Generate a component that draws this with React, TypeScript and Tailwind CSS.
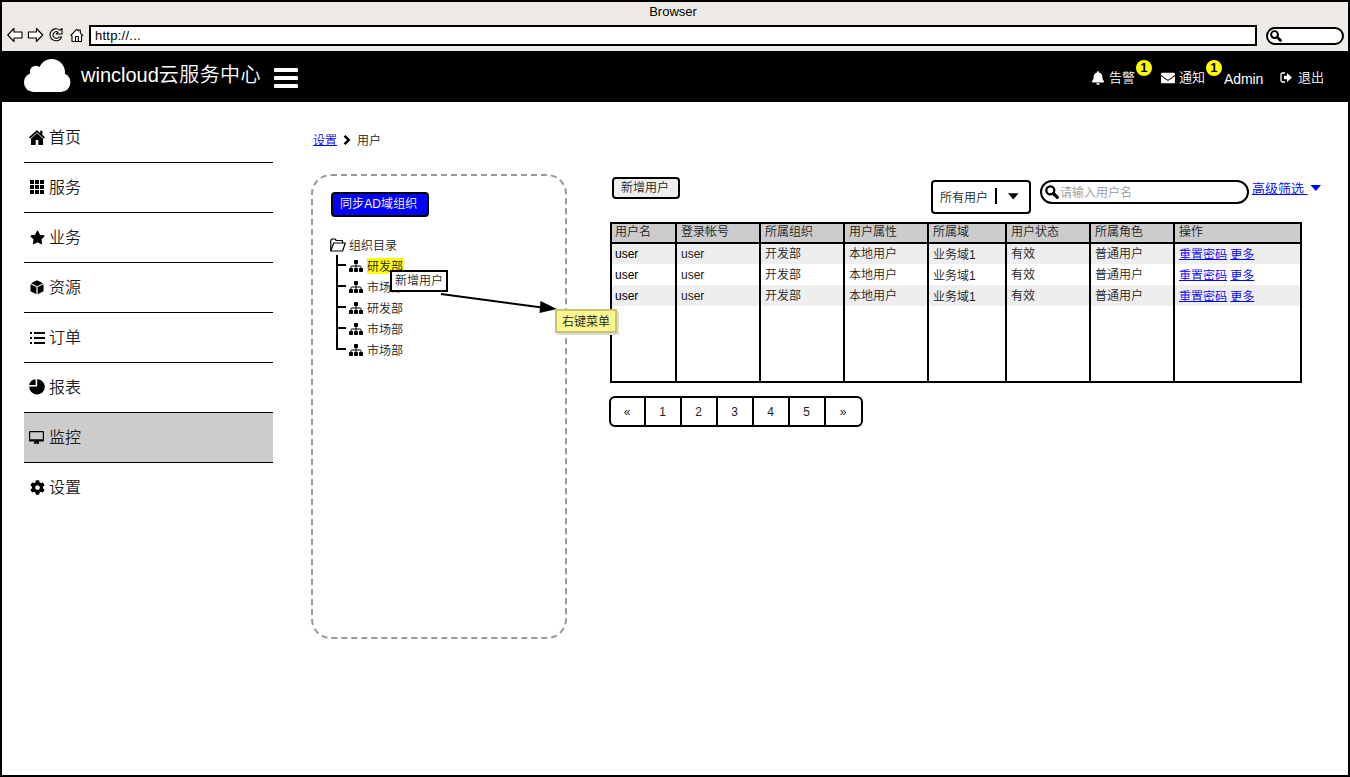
import { FaBell, FaCog, FaEnvelope, FaStar } from "react-icons/fa";
import type { ReactNode } from "react";

const HouseIcon = () => (
  <svg width="16" height="15" viewBox="0 0 16 15" fill="currentColor">
    <path d="M8 0L11.2 2.9V0.8H13.4V4.8L16 7.2L14.9 8.5L8 2.4L1.1 8.5L0 7.2Z" />
    <path d="M8 3.3L14 8.6V15H9.3V10H6.7V15H2V8.6Z" />
  </svg>
);

const CubeIcon = () => (
  <svg className="ml-px" width="14" height="15" viewBox="0 0 14 15" fill="currentColor">
    <path d="M7 0.3L13 3.2L7 6.2L1 3.2Z" />
    <path d="M0.5 4.2L6.4 7.1V14.3L0.5 11.2Z" />
    <path d="M13.5 4.2L7.6 7.1V14.3L13.5 11.2Z" />
  </svg>
);

const SitemapIcon = () => (
  <svg className="ml-[3px]" width="14" height="12" viewBox="0 0 14 12" fill="black">
    <rect x="5" y="0" width="4" height="4" rx="0.8" />
    <rect x="0" y="8" width="4" height="4" rx="0.8" />
    <rect x="5" y="8" width="4" height="4" rx="0.8" />
    <rect x="10" y="8" width="4" height="4" rx="0.8" />
    <path d="M7 3.5V8.5M2 8.5V6.7Q2 6 2.7 6H11.3Q12 6 12 6.7V8.5" fill="none" stroke="black" />
  </svg>
);

const GridIcon = () => (
  <svg className="ml-px" width="15" height="15" viewBox="0 0 15 15" fill="currentColor" shapeRendering="crispEdges">
    {[0, 5, 10].map((y) => [0, 5, 10].map((x) => <rect key={`${x}-${y}`} x={x} y={y} width="4" height="4" />))}
  </svg>
);

const ListIcon = () => (
  <svg className="-mt-px" width="16" height="13" viewBox="0 0 16 13" fill="currentColor" shapeRendering="crispEdges">
    {[1, 6, 11].map((y) => (
      <g key={y}>
        <rect x="1" y={y} width="2" height="2" />
        <rect x="5" y={y} width="11" height="2" />
      </g>
    ))}
  </svg>
);

const PieIcon = () => (
  <svg className="-mt-px" width="16" height="16" viewBox="0 0 16 16" fill="currentColor">
    <path d="M6.6 0.2V6H0.2A6.6 6.2 0 0 1 6.6 0.2Z" />
    <path d="M8.2 0.2A7.7 7.7 0 1 1 0.4 7.4H8.2Z" />
  </svg>
);

const MonitorIcon = () => (
  <svg width="15" height="14" viewBox="0 0 15 14" fill="currentColor">
    <path fillRule="evenodd" d="M1 0H14Q15 0 15 1V9.5Q15 10.5 14 10.5H9.6L10.3 12.8H4.7L5.4 10.5H1Q0 10.5 0 9.5V1Q0 0 1 0ZM1.2 1.2V8.2H13.8V1.2Z" />
  </svg>
);

const SearchIcon = ({ size }: { size: number }) => (
  <svg width={size} height={size} viewBox="0 0 14 14" fill="none" stroke="black">
    <circle cx="5.3" cy="5.3" r="4" strokeWidth="2.3" />
    <path d="M8.5 8.5L12.3 12.3" strokeWidth="3.2" strokeLinecap="round" />
  </svg>
);

const nav: { label: string; icon: ReactNode; active?: boolean }[] = [
  { label: "首页", icon: <HouseIcon /> },
  { label: "服务", icon: <GridIcon /> },
  { label: "业务", icon: <FaStar className="ml-px" size={15} /> },
  { label: "资源", icon: <CubeIcon /> },
  { label: "订单", icon: <ListIcon /> },
  { label: "报表", icon: <PieIcon /> },
  { label: "监控", icon: <MonitorIcon />, active: true },
  { label: "设置", icon: <FaCog className="-mt-px ml-px" size={15} /> },
];

const headers = ["用户名", "登录帐号", "所属组织", "用户属性", "所属域", "用户状态", "所属角色", "操作"];
const row = ["user", "user", "开发部", "本地用户", "业务域1", "有效", "普通用户"];
const departments = ["研发部", "市场部", "研发部", "市场部", "市场部"];
const columns = "grid grid-cols-[65px_84px_84px_84px_78px_84px_84px_125px]";

function cellLeading(r: number, low: boolean) {
  if (r === 0) return low ? "leading-[22px]" : "leading-[20px]";
  return low ? "leading-[24px]" : "leading-[22px]";
}

function BrowserChrome() {
  return (
    <div className="h-[49px] shrink-0 bg-[#eeeae5]">
      <div className="flex h-[23px] items-center justify-center pr-1 pb-1 text-[13px] leading-none">Browser</div>
      <div className="flex items-center">
        <svg className="-mt-[2px] ml-[5px] shrink-0" width="80" height="16" viewBox="0 0 80 16" fill="white" stroke="black" strokeWidth="1.1" strokeLinejoin="round">
          <path d="M0.7 8L7 1.5V5H15V11H7V14.5Z" />
          <path d="M35.7 8L29.4 1.5V5H21.4V11H29.4V14.5Z" />
          <path d="M53 3.3L55 1.5V7H49.3L51.2 5.2A3.3 3.3 0 1 0 52 10H54.6A6 6 0 1 1 53 3.3Z" />
          <path d="M63.8 8.3L69.7 2.3L71.5 3.8V3H73.3V5.8L75.7 8.3L74.5 9V14.5H65V9ZM68.5 14.5V9.5H71.3V14.5" />
        </svg>
        <div className="ml-[2px] flex h-[21px] w-[1168px] items-center border-2 border-black bg-white pl-1 pb-px text-[13px] leading-none tracking-[0.25px]">http://...</div>
        <div className="ml-[9px] flex h-[18px] w-[78px] items-center rounded-full border-2 border-black bg-white pl-[2px]">
          <SearchIcon size={12} />
        </div>
      </div>
    </div>
  );
}

function Header() {
  return (
    <header className="flex h-[51px] shrink-0 bg-black text-white">
      <svg className="mt-2 ml-[22px]" width="47" height="34" viewBox="0 0 47 34" fill="white">
        <circle cx="27.7" cy="13.4" r="13.3" />
        <circle cx="11.8" cy="12.7" r="6" />
        <circle cx="9.6" cy="23.4" r="9.6" />
        <circle cx="36.8" cy="23.4" r="9.6" />
        <path d="M9.6 12H36.8V33H9.6Z" />
      </svg>
      <h1 className="mt-[9px] ml-[10px] w-[181px] text-xl leading-[30px]">wincloud<span className="tracking-[0.4px]">云服务中心</span></h1>
      <div className="mt-[17px] ml-[12px] flex w-6 flex-col gap-1">
        <i className="h-1 rounded-[1px] bg-white" />
        <i className="h-1 rounded-[1px] bg-white" />
        <i className="h-1 rounded-[1px] bg-white" />
      </div>
      <div className="mt-[17px] ml-auto mr-6 flex h-5 text-[13px] leading-5">
        <FaBell className="mt-[3px] mr-[4px]" size={14} />
        <span className="relative w-[52px]">
          告警
          <b className="absolute -top-2 left-[27px] h-4 w-4 rounded-full bg-[#ffff00] text-center text-[13px] leading-4 font-bold text-black">1</b>
        </span>
        <FaEnvelope className="mt-[3px] mr-[4px]" size={14} />
        <span className="relative w-[45px]">
          通知
          <b className="absolute -top-2 left-[27px] h-4 w-4 rounded-full bg-[#ffff00] text-center text-[13px] leading-4 font-bold text-black">1</b>
        </span>
        <span className="mt-px w-[56px] text-sm leading-5 tracking-[-0.1px]">Admin</span>
        <svg className="mt-1 mr-[6px]" width="12" height="12" viewBox="0 0 12 12" fill="white">
          <path d="M5 1H2.5Q1 1 1 2.5V8.5Q1 10 2.5 10H5" fill="none" stroke="white" strokeWidth="1.3" />
          <path d="M4 3.8H7V1L12 5.5L7 10V7.2H4Z" />
        </svg>
        <span>退出</span>
      </div>
    </header>
  );
}

function OrganizationPanel() {
  return (
    <section className="relative mt-[25px] h-[465px] w-[256px] rounded-[20px] border-2 border-dashed border-[#999] pt-4 pl-[17px]">
      <button className="ml-px block h-[25px] w-[98px] rounded border-2 border-black bg-[#0000ff] pl-[7px] text-left leading-[21px] tracking-[0.1px] text-white">同步AD域组织</button>
      <div className="mt-[19px] flex h-[18px] items-center">
        <svg width="16" height="14" viewBox="0 0 16 14" fill="white" stroke="black" strokeWidth="1.2" strokeLinejoin="round">
          <path d="M0.8 13V2.2L2 1H5L6.3 2.5H12.5V5" />
          <path d="M0.8 13L3.8 5H15.3L12.6 13Z" />
        </svg>
        <span className="mt-[2px] ml-[3px]">组织目录</span>
      </div>
      <ul className="mt-px ml-[6px] h-[95px] w-[120px] border-l-2 border-black">
        {departments.map((name, i) => (
          <li key={i} className="flex h-[21px] items-start">
            <i className="mt-[9px] h-[2px] w-2 bg-black" />
            <span className="mt-[5px]"><SitemapIcon /></span>
            <span className={`mt-[3px] ml-1 h-4 leading-[19px] ${i === 0 ? "bg-[#ffff00] pr-px" : ""}`}>{name}</span>
          </li>
        ))}
      </ul>
      <svg className="absolute top-[116px] left-[127px]" width="120" height="26" viewBox="0 0 120 26">
        <path d="M1 2L102 15.5" stroke="black" strokeWidth="2" />
        <path d="M100.5 9L117 17L99.5 21Z" />
      </svg>
      <div className="absolute top-[94px] left-[77px] h-[22px] w-[58px] border-2 border-black bg-white pl-[3px] leading-[19px]">新增用户</div>
      <div className="absolute top-[133px] left-[242px] h-[24px] w-[62px] border-2 border-[#c8c372] bg-[#faf78f] pl-[5px] leading-[22px] shadow-[2px_2px_0_#dddada]">右键菜单</div>
    </section>
  );
}

function UserTable() {
  return (
    <div className="mt-2 h-[161px] w-[692px] border-2 border-black">
      <div className={`${columns} -ml-[2px] h-full w-[690px] grid-rows-[20px_20px_21px_21px_75px]`}>
        {headers.map((h, i) => (
          <div key={h} className={`border-b-2 border-l-2 border-black bg-[#ccc] leading-[17px] ${i ? "pl-[4px]" : "pl-[3px]"} ${i === 7 ? "w-[127px]" : ""}`}>{h}</div>
        ))}
        {[0, 1, 2].flatMap((r) => [
          ...row.map((value, c) => (
            <div key={`${r}-${c}`} className={`border-l-2 border-black ${cellLeading(r, c === 4)} ${c ? "pl-[4px]" : "pl-[3px] text-black"} ${r === 1 ? "" : "bg-[#eee]"}`}>{value}</div>
          )),
          <div key={`${r}-actions`} className={`w-[127px] border-l-2 border-black pl-1 text-[#0000ff] ${cellLeading(r, true)} ${r === 1 ? "" : "bg-[#eee]"}`}>
            <a className="underline underline-offset-0">重置密码</a> <a className="underline underline-offset-0">更多</a>
          </div>,
        ])}
        {headers.map((h) => <div key={`${h}-rest`} className="border-l-2 border-black" />)}
      </div>
    </div>
  );
}

export default function App() {
  return (
    <div className="flex h-[777px] w-[1350px] flex-col overflow-hidden border-2 border-black bg-white font-['Liberation_Sans','Noto_Sans_CJK_SC',sans-serif] text-xs font-[350] whitespace-nowrap text-black">
      <BrowserChrome />
      <Header />
      <main className="flex flex-1 text-[#1c1c1c]">
        <nav className="mt-[11px] ml-[22px] w-[249px] text-base">
          {nav.map((item, i) => (
            <a key={item.label} className={`flex h-[50px] items-center ${i < 7 ? "border-b border-black" : ""} ${item.active ? "bg-[#ccc] shadow-[0_-1px_0_black]" : ""}`}>
              <span className="flex w-[25px] items-center pl-[5px] text-black">{item.icon}</span>
              <span>{item.label}</span>
            </a>
          ))}
        </nav>
        <div className="mt-7 ml-[38px] w-[256px]">
          <div className="flex h-[19px] items-center pl-[2px]">
            <a className="mt-[2px] text-[#0000ff] underline underline-offset-0">设置</a>
            <svg className="mx-[6px]" width="8" height="10" viewBox="0 0 8 10" fill="none" stroke="black" strokeWidth="2.4">
              <path d="M1.5 0.8L5.8 5L1.5 9.2" />
            </svg>
            <span className="mt-[2px]">用户</span>
          </div>
          <OrganizationPanel />
        </div>
        <div className="mt-[75px] ml-[43px] w-[730px]">
          <div className="flex h-[37px] items-start">
            <button className="ml-[2px] h-[22px] w-[68px] rounded border-2 border-black bg-[#eee] pr-[2px] leading-[17px]">新增用户</button>
            <div className="mt-[3px] ml-[251px] flex h-[34px] w-[100px] items-center rounded border-2 border-black pl-[7px]">
              <span className="mt-px">所有用户</span>
              <i className="ml-[7px] mb-[3px] h-4 w-[2px] bg-black" />
              <svg className="mb-[2px] ml-[11px]" width="12" height="7" viewBox="0 0 12 7"><path d="M0 0.3H10.5L5.3 6.6Z" /></svg>
            </div>
            <div className="mt-[3px] ml-[9px] flex h-6 w-[209px] items-center rounded-full border-2 border-black pl-[3px] text-[#999]">
              <SearchIcon size={14} />
              <span className="mt-px ml-px">请输入用户名</span>
            </div>
            <a className="ml-[3px] text-[13px] leading-[24px] whitespace-pre text-[#0000ff] underline underline-offset-1">高级筛选 </a>
            <svg className="mt-2 ml-[2px]" width="12" height="7" viewBox="0 0 12 7" fill="#0000ff"><path d="M0.5 0H11L5.8 6Z" /></svg>
          </div>
          <UserTable />
          <div className="mt-[13px] -ml-px flex h-[31px] w-[254px] overflow-hidden rounded-md border-2 border-black">
            {["«", "1", "2", "3", "4", "5", "»"].map((p, i) => (
              <span key={p} className={`shrink-0 pr-px text-center leading-[28px] ${i === 0 ? "w-[33px]" : i === 6 ? "w-[37px] border-l-2 border-black" : "w-9 border-l-2 border-black"}`}>{p}</span>
            ))}
          </div>
        </div>
      </main>
    </div>
  );
}
